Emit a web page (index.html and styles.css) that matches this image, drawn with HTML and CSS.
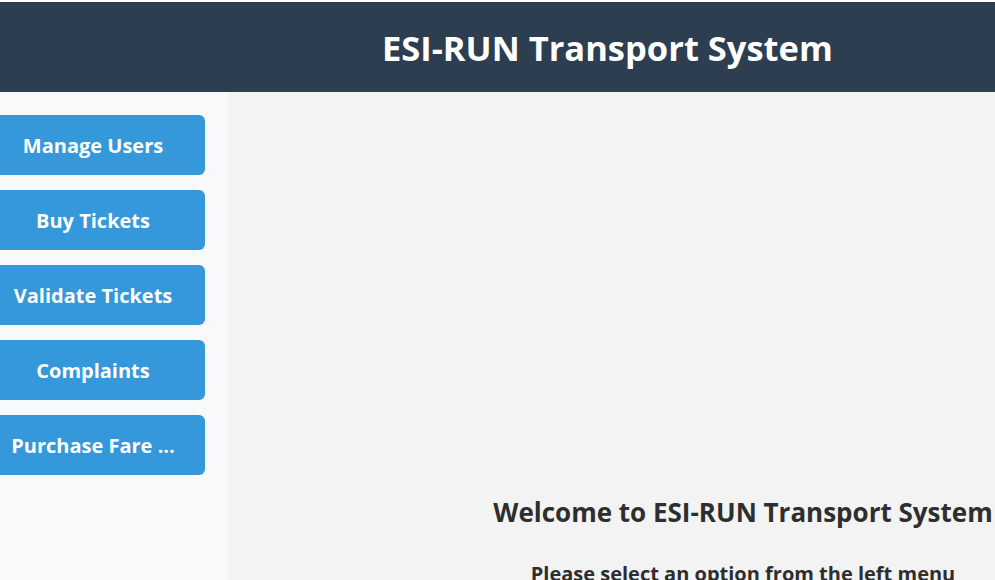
FILE: index.html
```
<!DOCTYPE html>
<html>
<head>
<meta charset="utf-8">
<link rel="stylesheet" href="styles.css">
</head>
<body>
<div class="app">
  <header class="topbar"><h1 class="title">ESI-RUN Transport System</h1></header>
  <div class="body">
    <nav class="sidebar">
      <button class="nav-btn">Manage Users</button>
      <button class="nav-btn">Buy Tickets</button>
      <button class="nav-btn">Validate Tickets</button>
      <button class="nav-btn">Complaints</button>
      <button class="nav-btn">Purchase Fare ...</button>
    </nav>
    <main class="main">
      <h2 class="welcome">Welcome to ESI-RUN Transport System</h2>
      <p class="hint">Please select an option from the left menu</p>
    </main>
  </div>
</div>
</body>
</html>
```
FILE: styles.css
```
html, body { margin: 0; padding: 0; background: #ffffff; overflow: hidden; }
body { font-family: "Open Sans", "Noto Sans", sans-serif; }
.app { width: 1258px; padding-top: 2px; display: flex; flex-direction: column; height: 578px; }
.topbar { flex: none; background: #2c3e50; height: 90px; display: flex; align-items: center; padding-left: 382px; }
.title { margin: 0; color: #ffffff; font-size: 34.5px; font-weight: 700; }
.body { display: flex; flex: 1; min-height: 0; }
.sidebar { width: 228px; flex: none; background: #f7f9fb; padding-top: 23px; box-sizing: border-box; display: flex; flex-direction: column; gap: 15px; }
.nav-btn { flex: none; width: 205px; height: 60px; border: none; border-radius: 0 6px 6px 0; background: #3498db; color: #ffffff; font-family: inherit; font-size: 20px; font-weight: 700; padding: 0 19px 0 0; text-align: center; white-space: nowrap; overflow: hidden; }
.main { flex: 1; background: #f3f3f3; display: flex; flex-direction: column; align-items: center; padding-top: 402px; }
.welcome { margin: 0; color: #2e2e2e; font-size: 26px; font-weight: 700; }
.hint { margin: 30px 0 0; color: #2e2e2e; font-size: 20px; font-weight: 700; }
```
